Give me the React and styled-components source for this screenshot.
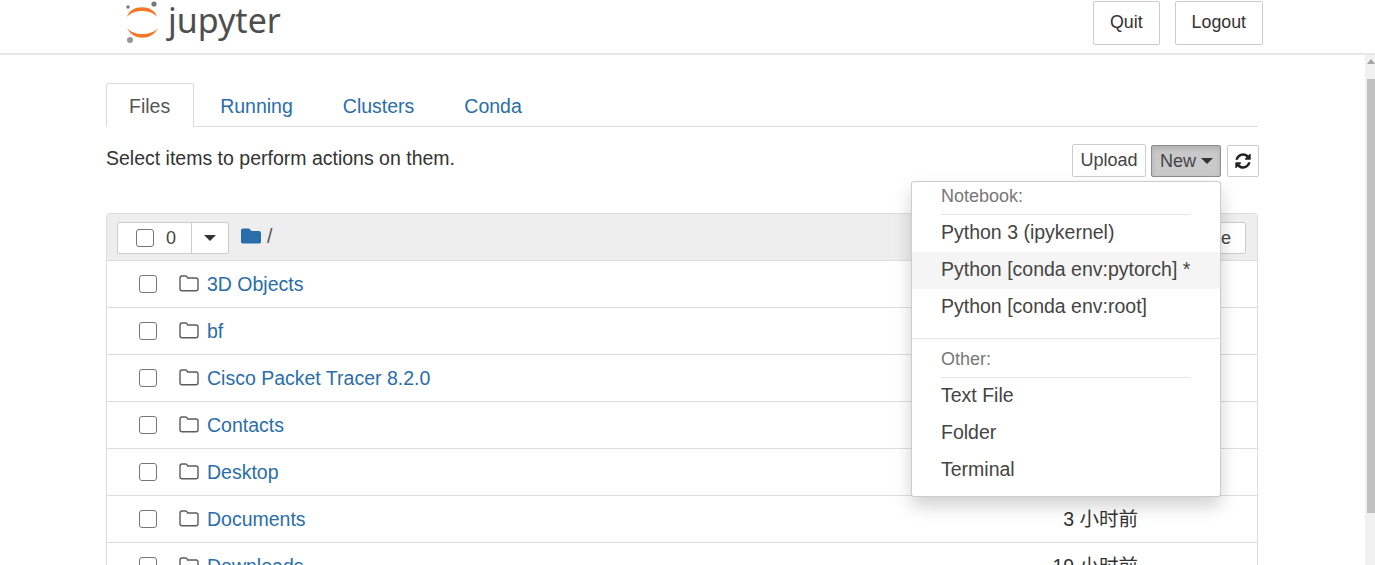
import React from 'react'
import styled, { createGlobalStyle } from 'styled-components'
import { FaFolder } from 'react-icons/fa'

const GlobalStyle = createGlobalStyle`
  html, body {
    margin: 0;
    height: 100%;
    overflow: hidden;
    background: #fff;
    font-family: "Liberation Sans", "Noto Sans CJK SC", Arial, sans-serif;
    color: #333;
  }
`

const Page = styled.div`
  height: 100vh;
  display: flex;
  flex-direction: column;
`

const Header = styled.header`
  flex: none;
  height: 53px;
  display: flex;
  justify-content: space-between;
  padding: 0 112px 0 124px;
  border-bottom: 2px solid #e7e7e7;
`

const Logo = styled.div`
  display: flex;
  align-items: flex-start;
  gap: 8px;
`

const LogoText = styled.span`
  font-family: "Noto Sans", sans-serif;
  font-size: 34px;
  line-height: 40px;
  color: #4e4e4e;
`

const HeaderButtons = styled.div`
  display: flex;
  gap: 15px;
  padding-top: 1px;
`

const HeaderButton = styled.button`
  height: 44px;
  padding: 0 16px 2px;
  background: #fff;
  border: 1px solid #ccc;
  border-radius: 2px;
  font: inherit;
  font-size: 17.8px;
  color: #333;
`

const Site = styled.div`
  flex: 1;
  min-height: 0;
  display: flex;
`

const Main = styled.main`
  flex: 1;
  min-width: 0;
  padding: 28px 107px 0 106px;
  overflow: hidden;
`

const Tabs = styled.nav`
  display: flex;
  gap: 3px;
  height: 44px;
  box-sizing: border-box;
  border-bottom: 1px solid #ddd;
`

const Tab = styled.a`
  height: 44px;
  box-sizing: border-box;
  padding: 0 23px 0 22px;
  border: 1px solid ${p => (p.$active ? '#ddd' : 'transparent')};
  border-bottom-color: ${p => (p.$active ? '#fff' : 'transparent')};
  border-radius: 3px 3px 0 0;
  background: ${p => (p.$active ? '#fff' : 'transparent')};
  font-size: 19.5px;
  line-height: 44px;
  color: ${p => (p.$active ? '#555' : '#296eaa')};
`

const ActionBar = styled.div`
  display: flex;
  justify-content: space-between;
  height: 86px;
  padding-top: 17px;
  box-sizing: border-box;
`

const Hint = styled.span`
  font-size: 19.5px;
  line-height: 28px;
`

const Actions = styled.div`
  display: flex;
  align-items: flex-start;
  margin-right: -1px;
`

const ActionButton = styled.button`
  height: 33px;
  padding: 0 8px;
  box-sizing: border-box;
  display: flex;
  align-items: center;
  background: #fff;
  border: 1px solid #ccc;
  border-radius: 2px;
  font: inherit;
  font-size: 18px;
  color: #444;
`

const UploadButton = styled(ActionButton)`
  width: 74px;
  justify-content: center;
  padding: 0;
`

const NewWrap = styled.div`
  position: relative;
  margin: 1px 6px 0 5px;
`

const NewButton = styled(ActionButton)`
  height: 32px;
  width: 70px;
  gap: 5px;
  background: #c9c9c9;
  border-color: #8c8c8c;
  box-shadow: inset 0 3px 5px rgba(0, 0, 0, 0.125);
`

const RefreshButton = styled(ActionButton)`
  width: 32px;
  height: 32px;
  margin-top: 1px;
  padding: 0;
  justify-content: center;
`

const RefreshIcon = styled.svg`
  width: 18px;
  height: 18px;
  fill: #222;
`

const Caret = styled.span`
  width: 0;
  height: 0;
  border-top: 6px solid #333;
  border-left: 6px solid transparent;
  border-right: 6px solid transparent;
`

const Menu = styled.div`
  position: absolute;
  top: 36px;
  right: 0;
  width: 310px;
  box-sizing: border-box;
  padding: 4px 0 7px;
  background: #fff;
  border: 1px solid rgba(0, 0, 0, 0.2);
  border-radius: 3px;
  box-shadow: 0 9px 18px rgba(0, 0, 0, 0.18);
  z-index: 5;
`

const MenuLabel = styled.div`
  margin: 0 30px 0 29px;
  padding-bottom: 8px;
  border-bottom: 1px solid #e5e5e5;
  font-size: 18px;
  line-height: 20px;
  color: #777;
`

const MenuItem = styled.div`
  height: 37px;
  padding-left: 29px;
  background: ${p => (p.$hover ? '#f5f5f5' : 'transparent')};
  font-size: 19.5px;
  line-height: 34px;
  color: #444;
`

const MenuDivider = styled.div`
  height: 1px;
  margin: 12px 0 10px;
  background: #e5e5e5;
`

const List = styled.section`
  border: 1px solid #ddd;
  border-radius: 3px 3px 0 0;
`

const ListHeader = styled.div`
  height: 47px;
  padding: 8px 11px 0 10px;
  box-sizing: border-box;
  display: flex;
  align-items: flex-start;
  background: #eee;
  border-bottom: 1px solid #ddd;
`

const SelectGroup = styled.div`
  display: flex;
  height: 32px;
  box-sizing: border-box;
  background: #fff;
  border: 1px solid #ccc;
  border-radius: 2px;
`

const SelectAll = styled.div`
  width: 74px;
  display: flex;
  align-items: center;
  gap: 12px;
  padding-left: 18px;
  box-sizing: border-box;
  border-right: 1px solid #ccc;
  font-size: 18px;
  color: #444;
`

const SelectCaret = styled.div`
  width: 36px;
  display: flex;
  align-items: center;
  justify-content: center;
`

const Check = styled.input.attrs({ type: 'checkbox' })`
  flex: none;
  appearance: none;
  width: 18px;
  height: 18px;
  margin: 0;
  box-sizing: border-box;
  background: #fff;
  border: 1.5px solid #767676;
  border-radius: 3px;
`

const Crumb = styled.div`
  display: flex;
  align-items: center;
  gap: 6px;
  height: 28px;
  margin-left: 12px;
  font-size: 19.5px;
  color: #555;
  svg {
    color: #296eaa;
    font-size: 20px;
  }
`

const SortButton = styled.button`
  margin-left: auto;
  height: 32px;
  padding: 0 14px 0 13px;
  background: #fff;
  border: 1px solid #ccc;
  border-radius: 2px;
  font: inherit;
  font-size: 18px;
  color: #444;
`

const Row = styled.div`
  height: 47px;
  box-sizing: border-box;
  display: flex;
  align-items: center;
  padding: 0 119px 0 32px;
  border-bottom: 1px solid #ddd;
`

const FolderIcon = styled.svg`
  flex: none;
  width: 20px;
  height: 17px;
  margin: 0 8px 2px 22px;
`

const Name = styled.a`
  font-size: 19.5px;
  color: #296eaa;
`

const Modified = styled.span`
  margin: 0 0 4px auto;
  font-size: 19.5px;
  color: #333;
`

const ScrollTrack = styled.div`
  flex: none;
  width: 10px;
  padding-left: 2px;
  box-sizing: border-box;
  background: #f1f1f1;
`

const ScrollArrow = styled.div`
  width: 0;
  height: 0;
  margin: 4px auto 0;
  border-bottom: 5px solid #a3a3a3;
  border-left: 4px solid transparent;
  border-right: 4px solid transparent;
`

const ScrollThumb = styled.div`
  height: 434px;
  margin-top: 15px;
  background: #c1c1c1;
`

const LogoMark = () => (
  <svg width="36" height="44" viewBox="124 0 36 44">
    <path d="M127 17C130 4 154 4 157 17C151 9 133 9 127 17Z" fill="#f37726" />
    <path d="M127 28C133 41 152 41 158 28C151 36 134 36 127 28Z" fill="#f37726" />
    <circle cx="154" cy="4" r="2.6" fill="#767677" />
    <circle cx="128" cy="7" r="1.7" fill="#767677" />
    <circle cx="130" cy="40" r="3" fill="#989798" />
  </svg>
)

const Folder = () => (
  <FolderIcon viewBox="0 0 20 17">
    <path
      d="M1 3.2C1 2 1.9 1 3 1h3.6c.8 0 1.400.5 1.700 1.200l.3.8H17c1.100 0 2 .9 2 2v8.800c0 1.100-.9 2-2 2H3c-1.100 0-2-.9-2-2z"
      fill="none"
      stroke="#5c5c5c"
      strokeWidth="1.400"
    />
  </FolderIcon>
)

const Refresh = () => (
  <RefreshIcon viewBox="0 0 1792 1792">
    <path d="M1639 1056q0 5-1 7-64 268-268 434.500t-478 166.500q-146 0-282.500-55t-243.500-157l-129 129q-19 19-45 19t-45-19-19-45v-448q0-26 19-45t45-19h448q26 0 45 19t19 45-19 45l-137 137q71 66 161 102t187 36q134 0 250-65t186-179q11-17 53-117 8-23 30-23h192q13 0 22.500 9.500t9.500 22.500zm25-800v448q0 26-19 45t-45 19h-448q-26 0-45-19t-19-45 19-45l138-138q-148-137-349-137-134 0-250 65t-186 179q-11 17-53 117-8 23-30 23h-199q-13 0-22.500-9.500t-9.500-22.500v-7q65-268 270-434.500t480-166.500q146 0 284 55.500t245 156.500l130-129q19-19 45-19t45 19 19 45z" />
  </RefreshIcon>
)

const rows = [
  { name: '3D Objects' },
  { name: 'bf' },
  { name: 'Cisco Packet Tracer 8.2.0' },
  { name: 'Contacts' },
  { name: 'Desktop' },
  { name: 'Documents', modified: '3 小时前' },
  { name: 'Downloads', modified: '19 小时前' },
]

function App() {
  return (
    <Page>
      <GlobalStyle />
      <Header>
        <Logo>
          <LogoMark />
          <LogoText>jupyter</LogoText>
        </Logo>
        <HeaderButtons>
          <HeaderButton>Quit</HeaderButton>
          <HeaderButton>Logout</HeaderButton>
        </HeaderButtons>
      </Header>
      <Site>
        <Main>
          <Tabs>
            <Tab $active>Files</Tab>
            <Tab>Running</Tab>
            <Tab>Clusters</Tab>
            <Tab>Conda</Tab>
          </Tabs>
          <ActionBar>
            <Hint>Select items to perform actions on them.</Hint>
            <Actions>
              <UploadButton>Upload</UploadButton>
              <NewWrap>
                <NewButton>New <Caret /></NewButton>
                <Menu>
                  <MenuLabel>Notebook:</MenuLabel>
                  <MenuItem>Python 3 (ipykernel)</MenuItem>
                  <MenuItem $hover>Python [conda env:pytorch] *</MenuItem>
                  <MenuItem>Python [conda env:root]</MenuItem>
                  <MenuDivider />
                  <MenuLabel>Other:</MenuLabel>
                  <MenuItem>Text File</MenuItem>
                  <MenuItem>Folder</MenuItem>
                  <MenuItem>Terminal</MenuItem>
                </Menu>
              </NewWrap>
              <RefreshButton><Refresh /></RefreshButton>
            </Actions>
          </ActionBar>
          <List>
            <ListHeader>
              <SelectGroup>
                <SelectAll><Check />0</SelectAll>
                <SelectCaret><Caret /></SelectCaret>
              </SelectGroup>
              <Crumb><FaFolder />/</Crumb>
              <SortButton>File size</SortButton>
            </ListHeader>
            {rows.map((row) => (
              <Row key={row.name}>
                <Check />
                <Folder />
                <Name>{row.name}</Name>
                {row.modified && <Modified>{row.modified}</Modified>}
              </Row>
            ))}
          </List>
        </Main>
        <ScrollTrack>
          <ScrollArrow />
          <ScrollThumb />
        </ScrollTrack>
      </Site>
    </Page>
  )
}

export default App
